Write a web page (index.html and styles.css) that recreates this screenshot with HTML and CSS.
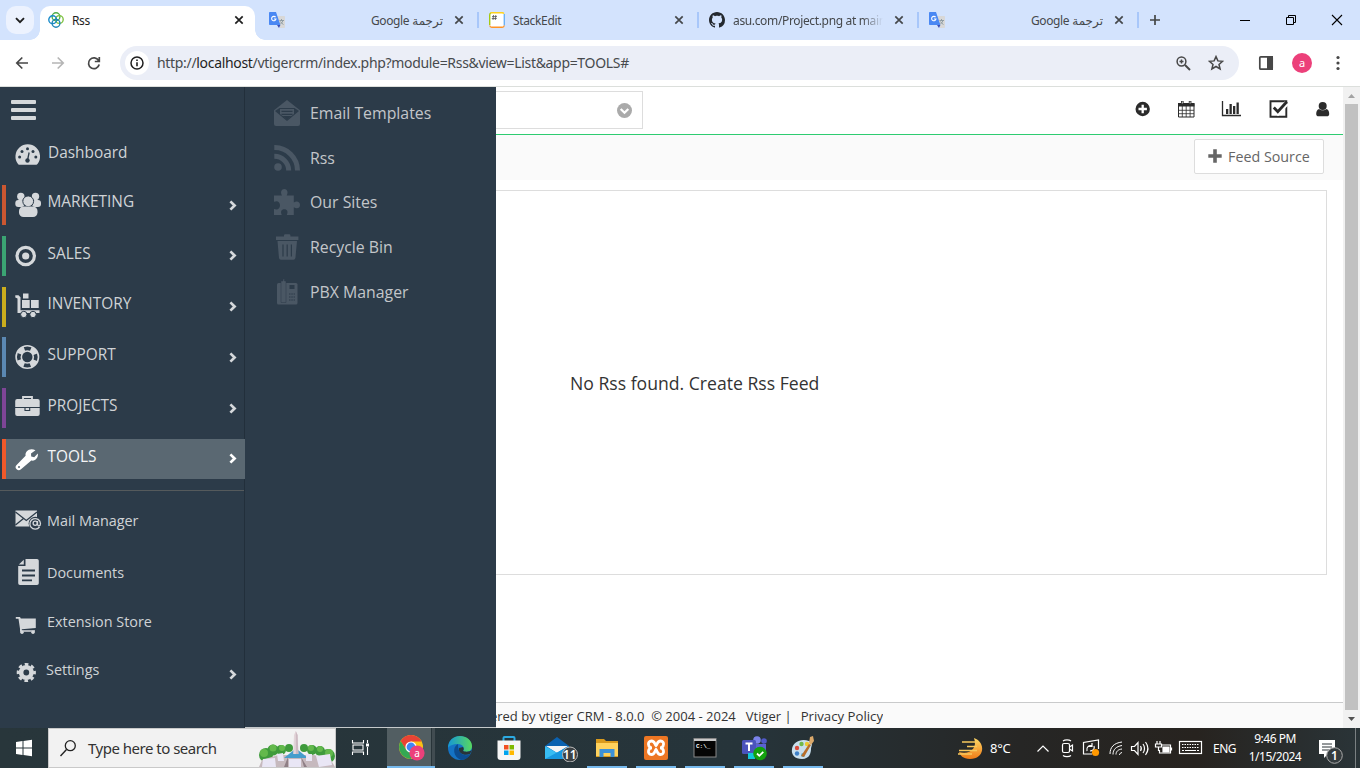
FILE: index.html
```html
<!DOCTYPE html>
<html lang="en">
<head>
<meta charset="utf-8">
<title>Rss</title>
<link rel="stylesheet" href="styles.css">
</head>
<body>
<svg class="defs" width="0" height="0">
  <symbol id="close" viewBox="0 0 10 10"><path d="M1.3 1.3 8.7 8.7M8.7 1.3 1.3 8.7" fill="none" stroke="currentColor" stroke-width="1.7"/></symbol>
  <symbol id="translate" viewBox="0 0 16 16"><path d="M7 4h8.2a.8.8 0 0 1 .8.8v10.4a.8.8 0 0 1-.8.8H11z" fill="#d8d8d8"/><path d="M10.500 8.500h4.500M12.500 7v1.500M14 8.500c-.5 1.500-1.500 2.800-2.700 3.700M11.500 9.500c.7 1.300 1.700 2.300 3 3" stroke="#8a999f" stroke-width=".9" fill="none"/><path d="M.8 0H7l4.400 13H.8a.8.8 0 0 1-.8-.8V.8A.8.8 0 0 1 .8 0z" fill="#4a88f3"/><path d="M8 13h3.400L10 16z" fill="#3a4fb8"/><path d="M6.600 5.200A2.200 2.200 0 1 0 7 7H4.900" stroke="#fff" stroke-width="1.100" fill="none"/></symbol>
  <symbol id="chev" viewBox="0 0 8 11"><path d="M1.400 1.400 5.600 5.500 1.400 9.600" fill="none" stroke="currentColor" stroke-width="2.700"/></symbol>
</svg>
<div class="screen">
  <header class="tabstrip">
    <div class="tab-search"><svg width="10" height="7" viewBox="0 0 10 7"><path d="M1 1.200 5 5.200 9 1.200" fill="none" stroke="#1f1f1f" stroke-width="1.900"/></svg></div>
    <div class="tab active">
      <svg width="16" height="16" viewBox="0 0 16 16" fill="none" stroke-width="1.400"><circle cx="8" cy="4.700" r="3.900" stroke="#4fae48"/><circle cx="11.300" cy="7.500" r="3.900" stroke="#7fc241"/><circle cx="4.700" cy="7.700" r="3.900" stroke="#1689c9"/><circle cx="8" cy="11.300" r="3.900" stroke="#1e87b8"/></svg>
      <span class="title">Rss</span><svg class="x" width="10" height="10"><use href="#close"/></svg>
    </div>
    <div class="tab first"><svg width="16" height="16"><use href="#translate"/></svg><span class="title" dir="rtl">ترجمة Google</span><svg class="x" width="10" height="10"><use href="#close"/></svg></div>
    <div class="tab">
      <svg width="16" height="16" viewBox="0 0 16 16"><rect x=".7" y=".7" width="14.600" height="14.600" rx="2.500" fill="#fff"/><path d="M.7 13V3A2.300 2.300 0 0 1 2 .9" stroke="#a5c912" stroke-width="1.400" fill="none"/><path d="M1.500.7H13a2.300 2.300 0 0 1 2 1" stroke="#ffd21c" stroke-width="1.400" fill="none"/><path d="M15.300 2v11.500" stroke="#6bb1f7" stroke-width="1.400"/><path d="M.8 13.500a2 2 0 0 0 2 1.800h10.400a2 2 0 0 0 2-1.800" stroke="#ff9326" stroke-width="1.400" fill="none"/><path d="M4.500 3 4 8M6.800 3l-.5 5M3 4.600h5M2.800 6.500h5" stroke="#555" stroke-width=".8"/></svg>
      <span class="title">StackEdit</span><svg class="x" width="10" height="10"><use href="#close"/></svg>
    </div>
    <div class="tab">
      <svg width="16" height="16" viewBox="0 0 16 16"><path fill="#24292f" d="M8 0C3.580 0 0 3.580 0 8c0 3.540 2.290 6.530 5.470 7.590.4.070.55-.17.55-.38 0-.19-.01-.82-.01-1.490-2.010.37-2.530-.49-2.690-.94-.09-.23-.48-.94-.82-1.130-.28-.15-.68-.52-.01-.53.63-.01 1.080.58 1.230.82.72 1.210 1.870.87 2.330.66.070-.52.28-.87.51-1.070-1.780-.2-3.640-.89-3.640-3.950 0-.87.31-1.590.82-2.150-.08-.2-.36-1.020.08-2.120 0 0 .67-.21 2.200.82.640-.18 1.320-.27 2-.27s1.360.09 2 .27c1.530-1.040 2.200-.82 2.200-.82.440 1.100.16 1.920.08 2.120.51.560.82 1.270.82 2.150 0 3.070-1.870 3.750-3.650 3.950.29.250.54.730.54 1.480 0 1.070-.01 1.930-.01 2.200 0 .21.15.46.55.38A8.010 8.010 0 0 0 16 8c0-4.420-3.580-8-8-8z"/></svg>
      <span class="title fade">asu.com/Project.png at main</span><svg class="x" width="10" height="10"><use href="#close"/></svg>
    </div>
    <div class="tab"><svg width="16" height="16"><use href="#translate"/></svg><span class="title" dir="rtl">ترجمة Google</span><svg class="x" width="10" height="10"><use href="#close"/></svg></div>
    <svg class="plus" width="12" height="12" viewBox="0 0 12 12"><path d="M6 1v10M1 6h10" stroke="#444746" stroke-width="1.700"/></svg>
    <div class="wincontrols">
      <svg width="46" height="40" viewBox="0 0 46 40"><path d="M18 20.500h10" stroke="#000"/></svg>
      <svg width="46" height="40" viewBox="0 0 46 40" fill="none" stroke="#000"><path d="M18.500 17.500h7v7h-7zM20.500 17v-1.500h7v7H26"/></svg>
      <svg width="46" height="40" viewBox="0 0 46 40"><path d="M18 15 28 25M28 15 18 25" stroke="#000" stroke-width="1.100"/></svg>
    </div>
  </header>

  <div class="toolbar">
    <svg class="nav" width="120" height="46" viewBox="0 0 120 46" fill="none" stroke-width="1.700">
      <path d="M28 23H17M22.300 17.500 16.800 23l5.500 5.500" stroke="#474747"/>
      <path d="M52 23h11M57.700 17.500 63.200 23l-5.500 5.500" stroke="#b5b5b5"/>
      <path d="M98.600 20.500A5.400 5.400 0 1 0 99.200 24.500M99.300 17v4.500h-4.500" stroke="#474747"/>
    </svg>
    <div class="omnibox">
      <div class="info"><svg width="14" height="14" viewBox="0 0 14 14"><circle cx="7" cy="7" r="6" fill="none" stroke="#1f1f1f" stroke-width="1.500"/><path d="M7 6.300v4M7 3.500v1.500" stroke="#1f1f1f" stroke-width="1.600"/></svg></div>
      <span class="url">http://<b>localhost</b>/vtigercrm/index.php?module=Rss&amp;view=List&amp;app=TOOLS#</span>
      <svg width="15" height="15" viewBox="0 0 15 15" fill="none" stroke="#474747" stroke-width="1.500"><circle cx="5.500" cy="5.500" r="4.400"/><path d="M9 9l5 5" stroke-width="1.900"/><path d="M5.500 3.500v4M3.500 5.500h4" stroke-width="1.500"/></svg>
      <svg class="star" width="16" height="16" viewBox="0 0 16 16"><path d="m8 1.600 1.900 4.300 4.700.4-3.600 3.100 1.100 4.600L8 11.500 3.900 14 5 9.400 1.400 6.300l4.700-.4z" fill="none" stroke="#474747" stroke-width="1.500"/></svg>
    </div>
    <svg width="121" height="46" viewBox="1239 40 121 46"><rect x="1259.800" y="56.800" width="12.400" height="12.400" rx="1" fill="none" stroke="#474747" stroke-width="1.700"/><path d="M1267 56h6v14h-6z" fill="#474747"/><g fill="#474747"><circle cx="1338" cy="57.500" r="1.600"/><circle cx="1338" cy="63" r="1.600"/><circle cx="1338" cy="68.500" r="1.600"/></g><circle cx="1302" cy="63" r="10" fill="#ec407a"/><text x="1302" y="66.500" text-anchor="middle" class="avatar">a</text></svg>
  </div>

  <main class="viewport">
    <nav class="sidebar">
      <div class="burger"><i></i><i></i><i></i></div>
      <div class="row dash">
        <svg width="41" height="40" viewBox="6 0 41 40"><path d="M18 30a12.300 12.300 0 1 1 19.500 0l-1 .8H18.800z" fill="#d5d8db"/><g fill="#2c3b49"><circle cx="19.600" cy="23" r="1.500"/><circle cx="22" cy="17.500" r="1.500"/><circle cx="27.500" cy="14.800" r="1.500"/><circle cx="33" cy="17.500" r="1.500"/><circle cx="35.800" cy="23" r="1.500"/><circle cx="27.500" cy="26.500" r="2.200"/></g><path d="m27.500 26.500 1.600-8" stroke="#2c3b49" stroke-width="1.300"/></svg>
        <span class="label">Dashboard</span>
      </div>
      <div class="mods">
        <div class="row mk"><svg width="41" height="40" viewBox="6 0 41 40" fill="#d5d8db"><circle cx="20.800" cy="11.500" r="3.700"/><circle cx="35.500" cy="11.500" r="3.700"/><rect x="15.300" y="15" width="9" height="7" rx="3"/><rect x="32" y="15" width="9" height="7" rx="3"/><circle cx="28.200" cy="16.300" r="5.400" stroke="#2c3b49"/><rect x="19" y="21.500" width="18.500" height="10.500" rx="4.500"/></svg><span class="label">MARKETING</span><svg class="chev" width="8" height="11"><use href="#chev"/></svg></div>
        <div class="row sa"><svg width="41" height="40" viewBox="6 0 41 40"><circle cx="25.700" cy="20" r="8.700" fill="none" stroke="#d5d8db" stroke-width="3.200"/><circle cx="25.700" cy="20" r="3.600" fill="#d5d8db"/></svg><span class="label">SALES</span><svg class="chev" width="8" height="11"><use href="#chev"/></svg></div>
        <div class="row in"><svg width="41" height="40" viewBox="6 0 41 40" fill="#d5d8db"><path d="M15.300 8.300h3.200l2 2v12.900h19V26H17.500V11.500l-2.200-1zM23 6.500h5.500v5H23zM22 13h7.700v8H22zM31 13h7.700v8H31z"/><circle cx="23.800" cy="27.500" r="3.200" stroke="#2c3b49"/><circle cx="33" cy="27.500" r="3.200" stroke="#2c3b49"/></svg><span class="label">INVENTORY</span><svg class="chev" width="8" height="11"><use href="#chev"/></svg></div>
        <div class="row su"><svg width="41" height="40" viewBox="6 0 41 40" fill="none"><circle cx="27.300" cy="20" r="11.200" stroke="#d5d8db" stroke-width="1.600"/><circle cx="27.300" cy="20" r="6" stroke="#d5d8db" stroke-width="1.600"/><circle cx="27.300" cy="20" r="8.500" stroke="#d5d8db" stroke-width="5.500" stroke-dasharray="7 6.350" stroke-dashoffset="-3.200"/></svg><span class="label">SUPPORT</span><svg class="chev" width="8" height="11"><use href="#chev"/></svg></div>
        <div class="row pr"><svg width="41" height="40" viewBox="6 0 41 40"><path d="M23 12V9h9v3" fill="none" stroke="#d5d8db" stroke-width="1.800"/><rect x="15.200" y="11" width="24.500" height="17" rx="2" fill="#d5d8db"/><path d="M15 19.500h25M25 19.500v3h4.700v-3" stroke="#2c3b49" stroke-width="1.100" fill="none"/></svg><span class="label">PROJECTS</span><svg class="chev" width="8" height="11"><use href="#chev"/></svg></div>
        <div class="row to"><svg width="41" height="40" viewBox="6 0 41 40"><path d="M35.500 11.200 31 14.500l.2 3 3 .8 3.600-3.700c.8 4-2.300 7.800-6.500 6.900L21 30.200a3 3 0 0 1-4.400-4.300l9-9.200c-.8-4.400 4-8.300 9.900-5.500z" fill="#fff"/><circle cx="19" cy="28" r="1" fill="#5a6872"/></svg><span class="label">TOOLS</span><svg class="chev" width="8" height="11"><use href="#chev"/></svg></div>
      </div>
      <div class="extras">
        <div class="item h52"><svg width="47" height="52" viewBox="0 495 47 52"><path d="M15.500 510.500h21.500v16H15.500z" fill="#d5d8db"/><path d="m15.500 512 10.800 8.500L37 512M15.500 525l8-6.500" fill="none" stroke="#2c3b49" stroke-width="1.300"/><circle cx="35.300" cy="523.500" r="6.700" fill="#2c3b49"/><path d="M39.500 527a5.300 5.300 0 1 1 1-3.500c0 3-3 3-3 .5v-3" fill="none" stroke="#d5d8db" stroke-width="1.300"/><circle cx="35.200" cy="523.200" r="2.100" fill="none" stroke="#d5d8db" stroke-width="1.300"/></svg><span>Mail Manager</span></div>
        <div class="item h52"><svg width="47" height="52" viewBox="0 547 47 52"><path d="M25.500 559H37a1.800 1.800 0 0 1 1.800 1.800v22.400A1.800 1.800 0 0 1 37 585H20a1.800 1.800 0 0 1-1.800-1.800V566h7.300zM23.800 559.800v4.600h-5z" fill="#d5d8db"/><path d="M22 570.500h13M22 575.500h13M22 580.300h10" stroke="#2c3b49" stroke-width="1.800"/></svg><span>Documents</span></div>
        <div class="item h46"><svg width="47" height="46" viewBox="0 599 47 46"><path d="M15.800 617h4.200l.8 1.500h15V628l-14 1.300v1H35v1.500H20v-3l-1.500-10H15.800z" fill="#d5d8db"/><circle cx="22" cy="632.300" r="1.700" fill="#d5d8db"/><circle cx="33" cy="632.300" r="1.700" fill="#d5d8db"/></svg><span>Extension Store</span></div>
        <div class="item h50"><svg width="46" height="50" viewBox="0 645 46 50" fill="none" stroke="#d5d8db"><circle cx="26.300" cy="672.500" r="5.200" stroke-width="4.600"/><circle cx="26.300" cy="672.500" r="8.200" stroke-width="2.800" stroke-dasharray="3.600 2.840" stroke-dashoffset="1.800"/></svg><span>Settings</span><svg class="chev" width="8" height="11"><use href="#chev"/></svg></div>
      </div>
    </nav>
    <nav class="submenu">
      <a><svg width="26" height="26" viewBox="0 0 26 26"><path d="M13 0 25 9.500l1 .8V24a2 2 0 0 1-2 2H2a2 2 0 0 1-2-2V10.300z" fill="#4a5764"/><path d="M1 11 5.500 8h15L25 11 13 21z" fill="#2c3b49"/><path d="M6 9h14v5l-7 5.500L6 14z" fill="#4a5764"/><path d="M7.500 11.300h11M7.500 14.300h11" stroke="#2c3b49" stroke-width="1.200"/><path d="M8.500 16h9L13 20z" fill="#2c3b49"/></svg><span>Email Templates</span></a>
      <a><svg width="26" height="26" viewBox="0 0 26 26"><circle cx="4" cy="22" r="3.800" fill="#4a5764"/><path d="M.3 11.300A14.300 14.300 0 0 1 14.700 25.500M.3 2.500A23 23 0 0 1 23.500 25.500" fill="none" stroke="#4a5764" stroke-width="5"/></svg><span>Rss</span></a>
      <a><svg width="26" height="26" viewBox="0 0 26 26"><path d="M0 6.500h8C6 3 7.500 0 10.300 0s4.300 3 2.400 6.500h7.100v7c3-2 6.200-.8 6.200 2.400s-3.200 4.400-6.200 2.300V26h-7c1.600-3.300.4-5.700-2.500-5.700S6.200 22.700 7.800 26H0v-6c3.700 1.500 6-.7 6-3.800S3.500 11 0 12.800z" fill="#4a5764"/></svg><span>Our Sites</span></a>
      <a><svg width="26" height="26" viewBox="0 0 26 26" fill="#4a5764"><path d="M2 2.500h8V1.300A1.200 1.200 0 0 1 11.200.2h4A1.200 1.200 0 0 1 16.400 1.300v1.200h8V6H2zM3.500 7h19.500l-1.600 17a2 2 0 0 1-2 1.800H7a2 2 0 0 1-2-1.800z"/><path d="M9 10.500v12M13.200 10.500v12M17.400 10.500v12" stroke="#2c3b49" stroke-width="1.200"/></svg><span>Recycle Bin</span></a>
      <a><svg width="26" height="26" viewBox="0 0 26 26" fill="#4a5764"><rect x="3" y="4" width="20.500" height="21.500" rx="1.500"/><path d="M7 2h2V0h1.500v2H12v21.500H7z" stroke="#2c3b49" stroke-width=".5"/><path d="M15.500 6h5v4h-5z" fill="#2c3b49"/><path d="M15 15h6M15 18h6M15 21h6" stroke="#2c3b49" stroke-width="1" stroke-dasharray="1.500 .8"/></svg><span>PBX Manager</span></a>
    </nav>
    <section class="content">
      <div class="topbar">
        <div class="searchbox"><svg width="15" height="15" viewBox="0 0 15 15"><circle cx="7.500" cy="7.500" r="7.500" fill="#aaa"/><path d="m3.700 6 3.800 3.700L11.300 6" fill="none" stroke="#fff" stroke-width="2.300"/></svg></div>
        <svg class="tools" width="220" height="47" viewBox="1123 87 220 47" fill="#2b2b2b"><circle cx="1142.700" cy="109" r="7.200"/><path d="M1142.700 104.800v8.400M1138.500 109h8.400" stroke="#fff" stroke-width="2.300"/>
          <path d="M1178.500 103.500h15.500v13.500h-15.500z" fill="#fff" stroke="#2b2b2b"/><path d="M1178 103h16.500v3.500H1178z"/><path d="M1182.300 106v11M1186.200 106v11M1190.100 106v11M1178 110.300h16M1178 113.700h16" stroke="#2b2b2b" stroke-width=".8"/><path d="M1182.300 101v3M1190.100 101v3" stroke="#2b2b2b" stroke-width="2.600"/><path d="M1182.300 101.500v2M1190.100 101.500v2" stroke="#fff" stroke-width=".8"/>
          <path d="M1222.500 101v14.500h18.500" fill="none" stroke="#2b2b2b" stroke-width="1.300"/><path d="M1226 109h2.300v5h-2.300zM1229.500 104h2.300v10h-2.300zM1233 106h2.300v8h-2.300zM1236.500 102.500h2.300v11.500h-2.300z"/>
          <path d="M1270.500 101.200h15.800v15.500h-15.800z" fill="none" stroke="#2b2b2b" stroke-width="1.900"/><path d="m1273.800 108 4.200 4.500 8.800-9.500" fill="none" stroke="#fff" stroke-width="5"/><path d="m1273.800 107.500 4 4.300 9-10" fill="none" stroke="#2b2b2b" stroke-width="2.800"/>
          <circle cx="1322.700" cy="106" r="4"/><path d="M1319 109c2 1.800 5.500 1.800 7.500 0 2.200.5 2.700 3 2.700 5 0 1.500-1 2.300-2.300 2.300h-8.400c-1.300 0-2.300-.8-2.300-2.300 0-2 .6-4.500 2.800-5z"/></svg>
      </div>
      <div class="actions"><button><svg width="14" height="14" viewBox="0 0 14 14"><path d="M7 .3v13.400M.3 7h13.400" stroke="#666" stroke-width="3.600"/></svg><span>Feed Source</span></button></div>
      <div class="panel"><span>No Rss found. Create Rss Feed</span></div>
      <footer><div class="foot"><span class="fa">Powered by vtiger CRM - 8.0.0&nbsp; © 2004 - 2024</span><span class="fb">Vtiger |</span><span class="fc">Privacy Policy</span></div></footer>
    </section>
    <div class="scroll"><svg width="17" height="17" viewBox="0 0 17 17"><path d="M5 11h7L8.500 7z" fill="#a3a3a3"/></svg><div class="thumb"></div><svg width="17" height="18" viewBox="0 0 17 18"><path d="M5 7h7l-3.500 4z" fill="#505050"/></svg></div>
  </main>

  <div class="taskbar">
    <svg width="48" height="40" viewBox="0 0 48 40" fill="#fff"><path d="m16 14 6.500-1v6.500H16zM23.500 12.900 32 11.800v7.700h-8.500zM16 20.500h6.500V27L16 26zM23.500 20.500H32v7.700l-8.500-1.100z"/></svg>
    <div class="tasksearch">
      <svg width="16" height="17" viewBox="0 0 16 17"><circle cx="10.300" cy="5.700" r="5" fill="none" stroke="#222" stroke-width="1.300"/><path d="M6.500 9.500.5 16" stroke="#222" stroke-width="1.400"/></svg>
      <span>Type here to search</span>
      <svg class="city" width="78" height="38" viewBox="257 730 78 38"><g fill="#3f9b3c"><circle cx="266" cy="756" r="7"/><circle cx="273" cy="751" r="5.500"/><circle cx="281" cy="751" r="5"/><circle cx="289" cy="749" r="4"/><circle cx="304" cy="749" r="4"/><circle cx="312" cy="751" r="5"/><circle cx="320" cy="752" r="5"/><circle cx="328" cy="757" r="7"/></g><g fill="#63b94c"><circle cx="264" cy="754" r="4"/><circle cx="273" cy="749" r="3.500"/><circle cx="282" cy="749" r="3"/><circle cx="311" cy="749" r="3"/><circle cx="320" cy="750" r="3"/><circle cx="329" cy="754" r="4"/></g><path d="m259 768 3-7 16-5h36l17 5 4 7z" fill="#c6b9be"/><path d="m284 759 10-8h4l10 8z" fill="#459dcc"/><path d="m293.200 755 .8-19 1.800-4 1.800 4 .8 19z" fill="#e3d5d9"/><path d="m295.800 732 1.800 4 .8 19h-2.600z" fill="#cdbac2"/><path d="M263 760l12-1 1 9h-14zM277 755l6-1 1 8h-6zM289 760h12v8h-12zM306 755h6v7h-6zM316 757l14-2 2 11-13 2z" fill="#e9e6f5"/><path d="m284 768 4-10v10zM304 768l-3-10 6 10z" fill="#8f7f86"/></svg>
    </div>
    <svg class="tv" width="50" height="40" viewBox="336 728 50 40" fill="none" stroke="#fff" stroke-width="1.100"><path d="M352.500 740v3h11v-3M352.500 755v-3h11v3M353 745h10v5h-10zM367.500 740v3M367.500 747v8"/><path d="M366 743.500h3v3h-3z" fill="#fff" stroke="none"/></svg>
    <div class="app sel"><svg width="28" height="28" viewBox="0 0 28 28"><circle cx="14" cy="13" r="12" fill="#fbc116"/><path d="M14 1a12 12 0 0 0-10.300 6l5.400 9H14V7.500h10.500A12 12 0 0 0 14 1z" fill="#e94335"/><path d="M3.700 7A12 12 0 0 0 14 25l5-9H9.300z" fill="#34a853"/><circle cx="14" cy="13" r="5.600" fill="#fff"/><circle cx="14" cy="13" r="4.400" fill="#4285f4"/><circle cx="20" cy="19" r="7.600" fill="#ec407a"/><text x="20" y="22.500" text-anchor="middle" class="badge">a</text></svg></div>
    <div class="app"><svg width="28" height="28" viewBox="0 0 28 28"><defs><linearGradient id="eg"><stop stop-color="#1597d6"/><stop offset="1" stop-color="#58d85f"/></linearGradient></defs><circle cx="14" cy="14" r="12" fill="#1473c5"/><path d="M2 14C2 6 8 2 14 2s12 4 12 10-6 7-9 5c2-3 0-7-5-7S3 12 2 14z" fill="url(#eg)"/><path d="M12 10c-6 3-5 13 3 16 4 0 8-3 9.500-6-5 3-13 1-12.500-10z" fill="#0c4d91"/><path d="M13 14c-1 6 6 8 11 6l2-4c-2 2-7 2-9 1 1-1 1-3 0-4z" fill="#283439"/></svg></div>
    <div class="app"><svg width="28" height="28" viewBox="0 0 28 28"><path d="M8.500 7.500V4a1 1 0 0 1 1-1h9a1 1 0 0 1 1 1v3.500" stroke="#2caae2" stroke-width="2" fill="none"/><path d="M2.500 6.500h23V23a3 3 0 0 1-3 3h-17a3 3 0 0 1-3-3z" fill="#f6f6f6"/><path d="M9 11h4.500v4.500H9z" fill="#f25022"/><path d="M14.500 11H19v4.500h-4.500z" fill="#7fba00"/><path d="M9 16.500h4.500V21H9z" fill="#00a4ef"/><path d="M14.500 16.500H19V21h-4.500z" fill="#ffb900"/></svg></div>
    <div class="app"><svg width="42" height="28" viewBox="0 0 42 28"><path d="m8 12 12-9 12 9v12H8z" fill="#0b62b0"/><path d="M9 12h22l-11 7z" fill="#f5f5f5"/><path d="M8 12v13h23z" fill="#38bdf3"/><path d="M32 12v13H8z" fill="#1898e0"/><circle cx="33" cy="20.500" r="7.500" fill="#3c4144" stroke="#bbb"/><text x="32.800" y="24.700" text-anchor="middle" class="count bold">11</text></svg></div>
    <div class="app run"><svg width="28" height="28" viewBox="0 0 28 28"><path d="M3 5h8l2 2h12v16H3z" fill="#d99a1d"/><path d="M3 9h22v13H3z" fill="#ffd25d"/><path d="M6.500 23v-8h15v8h-4v-4h-7v4z" fill="#3c91d8"/></svg></div>
    <div class="app run"><svg width="28" height="28" viewBox="0 0 28 28"><rect x="2" y="2" width="24" height="24" rx="2" fill="#ed7623"/><path d="M10 13.800c-4 0-5.200-6.800-.5-6.800 3.500 0 3 3.500 4.500 4.500 1.500-1 1-4.500 4.500-4.500 4.700 0 3.500 6.800-.5 6.800 4 0 5.200 6.700.5 6.700-3.500 0-3-3.500-4.500-5-1.500 1.500-1 5-4.500 5-4.700 0-3.500-6.700.5-6.700z" fill="none" stroke="#fff" stroke-width="2.800"/></svg></div>
    <div class="app run"><svg width="28" height="28" viewBox="0 0 28 28"><rect x="3" y="4.500" width="22" height="18.500" fill="#050505" stroke="#888"/><path d="M3 5h22v2H3z" fill="#c9c9c9"/><text x="5" y="13.500" class="cmd">C:\_</text></svg></div>
    <div class="app run"><svg width="28" height="28" viewBox="0 0 28 28"><circle cx="17" cy="6" r="3.800" fill="#7b83eb"/><circle cx="24" cy="7" r="2.800" fill="#5059c9"/><path d="M13 10h13v7a5 5 0 0 1-5 4h-8z" fill="#5b62d2"/><rect x="2" y="6" width="14" height="14" rx="1.500" fill="#4b53bc"/><path d="M5.500 9.500h7M9 9.500V17" stroke="#fff" stroke-width="2"/><path d="M8 19h7v6H8z" fill="#12c6da"/><circle cx="20" cy="19.500" r="6.800" fill="#13a10e"/><path d="m17 19.500 2.300 2.300 4-4" fill="none" stroke="#fff" stroke-width="1.800"/></svg></div>
    <div class="app run"><svg width="28" height="28" viewBox="0 0 28 28"><path d="M3 15C4 8 12 4 20 7c5 3 2 5 2 8s-1 10-9 10C6 25 2 21 3 15z" fill="#c9dfed"/><circle cx="8" cy="14" r="2.200" fill="#d94c3d"/><circle cx="12.500" cy="10" r="2.200" fill="#70b84a"/><circle cx="18" cy="10" r="2.200" fill="#edc832"/><circle cx="8" cy="19.500" r="2.200" fill="#3c7fc7"/><circle cx="14" cy="21" r="2" fill="#58b5d6"/><path d="m12 22 8-12 2 1-7 12z" fill="#b86e2a"/><path d="m20 9 1-6 3-1 1 5-3 4z" fill="#dba96b"/></svg></div>
    <div class="tray">
      <svg width="46" height="40" viewBox="940 728 46 40"><defs><linearGradient id="mg" x2="0" y2="1"><stop stop-color="#ffd867"/><stop offset="1" stop-color="#f07b16"/></linearGradient></defs><path d="M974 738c12 4 11 21-4 21-7 0-10-4-11-7 10 3 19-3 15-14z" fill="url(#mg)"/><path d="M962 742h17M967 746.500h10M959 750.500h18M958 754h14" stroke="#f8c75c" stroke-width="1.700"/></svg>
      <span class="temp">8°C</span>
      <svg class="sys" width="186" height="40" viewBox="1024 728 186 40" fill="none" stroke="#fff" stroke-width="1.200"><path d="m1037.500 751.500 5.500-5.500 5.500 5.500"/><rect x="1062.500" y="743.500" width="7" height="9" rx="1.500"/><path d="m1069.500 747 3-2v6l-3-2M1063 741c2-1.500 6-1.500 8 0M1063 755.500c2 1.500 6 1.500 8 0"/><path d="M1092 754h-8.500v-11.500l15-2.500v9M1087 751c-1-4 2-6 5-5M1092 743v3.500h-3M1094 746c1 3-1 5-4 5"/><circle cx="1095.500" cy="752.500" r="3.600" fill="#ff9800" stroke="none"/><path d="M1110 754c0-7 4-11 12-12M1113 754.500c0-5 3-8 9-9M1116 754.500c0-3 2-5 6-5.500M1119.500 755c0-1.500 1-2 2.500-2.500" stroke-width="1"/><path d="M1131.500 746.500h3l3.500-4v12l-3.500-4h-3zM1140.500 746c1 1.500 1 3.500 0 5M1143 744c2 2.500 2 6.500 0 9M1145.500 742c3 4 3 9 0 13"/><path d="M1161 745h9.500v8h-11v-3M1171.500 747.500v3M1157 741v3M1160 741v3M1155.500 744h6v3h-6zM1158.500 747v4"/><path d="M1163 747h6v5h-6z" fill="#fff"/><rect x="1179.500" y="741.500" width="22" height="12"/><path d="M1182 744.500h17M1182 747.500h17" stroke-dasharray="1.500 1"/><path d="M1182 750.500h2M1185 750.500h11M1197 750.500h2"/></svg>
      <span class="lang">ENG</span>
      <div class="clock"><span>9:46 PM</span><span class="date">1/15/2024</span></div>
      <svg class="note" width="50" height="40" viewBox="1310 728 50 40"><path d="M1319 740h16v14h-7l-4 4v-4h-5z" fill="#fff"/><path d="M1322 744h10M1322 747h10M1322 750h7" stroke="#2a3336"/><circle cx="1334.500" cy="755.500" r="7.800" fill="#343b3e" stroke="#aaa"/><text x="1334.500" y="760" text-anchor="middle" class="count bold">1</text><path d="M1355.500 728v40" stroke="#7a8082"/></svg>
    </div>
  </div>
</div>
</body>
</html>
```
FILE: styles.css
```css
* { box-sizing: border-box; }
body { margin: 0; overflow: hidden; font-family: "Open Sans", "Noto Sans", sans-serif; }
.defs { position: absolute; }
svg { display: block; flex: none; }
.screen { width: 1360px; height: 768px; display: flex; flex-direction: column; background: #fff; overflow: hidden; }

.tabstrip { height: 40px; flex: none; display: flex; align-items: center; background: #d3e3fd; padding-left: 6px; font: 12px "Noto Sans", "DejaVu Sans", sans-serif; color: #45484b; }
.tab-search { width: 28px; height: 28px; border-radius: 10px; background: #ecf2fe; display: flex; align-items: center; justify-content: center; margin-right: 6px; }
.tab { width: 220px; height: 40px; display: flex; align-items: center; padding: 0 14px 0 10px; background: linear-gradient(#a8c7fa, #a8c7fa) right center / 2px 16px no-repeat; }
.tab .title { flex: 1; margin: 0 11px 0 8px; white-space: nowrap; overflow: hidden; letter-spacing: -.35px; }
.tab .title[dir] { letter-spacing: -.4px; }
.tab .x { color: #45484b; margin-right: 1px; }
.tab .fade { -webkit-mask-image: linear-gradient(90deg, #000 86%, transparent); mask-image: linear-gradient(90deg, #000 86%, transparent); }
.tab.first { margin-left: 4px; }
.tab.active { position: relative; width: 215px; height: 34px; margin-top: 6px; padding: 0 11px 6px 8px; background: #fff; border-radius: 10px 10px 0 0; color: #1f1f1f; }
.tab.active .x { color: #1f1f1f; margin-right: 0; }
.tab.active::before, .tab.active::after { content: ""; position: absolute; bottom: 0; width: 10px; height: 10px; }
.tab.active::before { left: -10px; background: radial-gradient(circle at 0 0, transparent 9.500px, #fff 10px); }
.tab.active::after { right: -10px; background: radial-gradient(circle at 100% 0, transparent 9.500px, #fff 10px); }
.plus { margin-left: 10px; }
.wincontrols { display: flex; margin-left: auto; }

.toolbar { height: 47px; flex: none; display: flex; border-bottom: 1px solid #dcdfdc; background: #fff; }
.omnibox { flex: 1; height: 34px; margin-top: 6px; border-radius: 17px; background: #ebeef7; display: flex; align-items: center; padding: 0 15px 0 5px; }
.info { width: 24px; height: 24px; border-radius: 50%; background: #fff; display: flex; align-items: center; justify-content: center; }
.url { flex: 1; margin-left: 8px; padding-bottom: 2px; font: 14px "Noto Sans", sans-serif; color: #474a4d; letter-spacing: -.32px; }
.url b { font-weight: 400; color: #1f1f1f; }
.star { margin-left: 17px; }
.avatar { font: 11px "Noto Sans", sans-serif; fill: #fff; }

.viewport { height: 641px; flex: none; display: flex; }
.sidebar { width: 245px; background: #2c3b49; border-right: 1px solid #222f3b; color: #d0d3d6; }
.burger { height: 47px; padding: 13px 0 0 11px; display: flex; flex-direction: column; gap: 4px; }
.burger i { width: 25px; height: 4px; border-radius: 1px; background: #d5d8db; }
.row { display: flex; height: 40px; align-items: center; border-left: 4px solid transparent; margin-left: 2px; }
.label { flex: 1; font-size: 15.400px; line-height: 20px; white-space: nowrap; }
.dash .label { padding: 0 0 3px 1px; }
.chev { margin-right: 7px; color: #d5d8db; }
.mods { padding: 11px 0; display: flex; flex-direction: column; gap: 10.800px; border-bottom: 1px solid #555a5c; }
.mods .label { padding: 0 0 4.600px .5px; }
.mods .mk .label { padding-bottom: 7px; }
.mk { border-color: #cb5731; }
.sa { border-color: #3ba473; }
.in { border-color: #cbad1d; }
.su { border-color: #5b88b2; }
.pr { border-color: #7e4596; }
.to { border-color: #f1592a; background: #5a6872; color: #f4f5f6; margin-right: -1px; }
.to .chev { color: #fff; margin-right: 8px; }
.extras { padding-top: 4px; font-size: 14.400px; }
.item { display: flex; align-items: center; white-space: nowrap; }
.item .chev { margin: 9px 7px 0 auto; }
.h52 { height: 52px; }
.h46 { height: 46px; }
.h50 { height: 50px; }

.submenu { width: 251px; padding-top: 3.600px; background: #2c3b49; border-bottom: 1px solid #c5c9cb; color: #c3c6c9; font-size: 15.850px; }
.submenu a { display: flex; align-items: center; height: 44.750px; padding-left: 29px; gap: 10px; white-space: nowrap; }

.content { flex: 1; display: flex; flex-direction: column; min-width: 0; }
.topbar { height: 48px; display: flex; justify-content: space-between; border-bottom: 1px solid #2ecc71; }
.searchbox { width: 147px; height: 38px; margin-top: 4px; border: 1px solid #ddd; border-left: 0; display: flex; align-items: center; justify-content: flex-end; padding-right: 10px; }
.actions { height: 45px; background: #fafafa; display: flex; justify-content: flex-end; padding: 4px 19px 0 0; }
.actions button { width: 130px; height: 35px; border: 1px solid #ddd; border-radius: 2px; background: #fff; display: flex; align-items: center; gap: 6px; padding: 0 0 1px 13px; font: 14.300px "Open Sans", sans-serif; color: #666; white-space: nowrap; }
.panel { height: 385px; margin: 10px 16px 0 0; border: 1px solid #ddd; border-left: 0; display: flex; align-items: center; padding-left: 74px; font-size: 17.630px; color: #333; }
footer { margin-top: auto; height: 26px; border-top: 1px solid #c9cacb; background: #fafafa; }
.foot { width: 387px; height: 26px; overflow: hidden; display: flex; align-items: center; justify-content: flex-end; white-space: nowrap; font-size: 13px; color: #333; }
.fb { margin-left: 11px; }
.fc { margin-left: 9px; font-size: 13.200px; }
.fa { margin-right: -1px; }
.scroll { width: 17px; background: #f1f1f1; display: flex; flex-direction: column; }
.thumb { flex: 1; margin: 0 2px; background: #c1c1c1; }

.taskbar { height: 40px; flex: none; display: flex; background: linear-gradient(90deg, #28363b, #26343a 55%, #262625 75%, #27231f 88%, #2a3438); color: #fff; font-family: "Noto Sans", sans-serif; }
.tasksearch { width: 288px; background: #f2f2f2; border: 1px solid #c9c9c9; display: flex; align-items: center; padding-left: 11px; color: #333; font-size: 15px; white-space: nowrap; }
.tasksearch span { flex: 1; margin-left: 12px; letter-spacing: -.5px; }
.app { width: 49px; display: flex; align-items: center; justify-content: center; }
.run { background: linear-gradient(#76b9ed, #76b9ed) center bottom / 40px 2px no-repeat; }
.sel { background: linear-gradient(#76b9ed, #76b9ed) 1px bottom / 48px 2px no-repeat, linear-gradient(90deg, transparent 1px, #525e62 1px, #525e62 45px, #283439 45px, #283439 46px, #414c51 46px); }
.badge { font: 10px "Noto Sans", sans-serif; fill: #fff; }
.count { font: 12px "Noto Sans", sans-serif; fill: #fff; }
.bold { font-weight: 600; }
.cmd { font: bold 6px "Liberation Mono", monospace; fill: #fff; }
.tray { margin-left: auto; width: 420px; display: flex; align-items: center; font-size: 12px; }
.temp { width: 38px; padding-left: 4px; font-size: 13px; letter-spacing: -.3px; }
.lang { width: 30px; padding-left: 3px; letter-spacing: -.5px; }
.clock { flex: 1; display: flex; flex-direction: column; align-items: center; line-height: 18px; letter-spacing: -.5px; }
```
